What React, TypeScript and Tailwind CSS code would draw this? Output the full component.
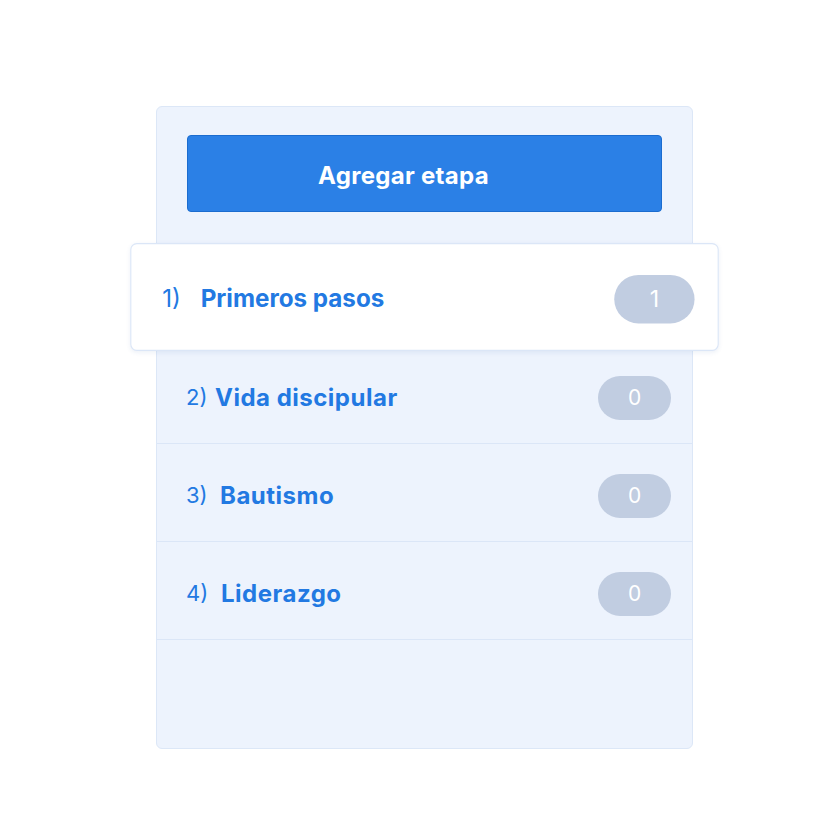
import React from "react";

const stages = [
  { n: 1, name: "Primeros pasos", count: 1, gap: "w-[35px]" },
  { n: 2, name: "Vida discipular", count: 0, gap: "w-[29px]" },
  { n: 3, name: "Bautismo", count: 0, gap: "w-[34px]" },
  { n: 4, name: "Liderazgo", count: 0, gap: "w-[35px]" },
];

const StageRow = ({ n, name, count, gap, active }: { n: number; name: string; count: number; gap: string; active?: boolean }) => {
  return (
    <div
      className={
        active
          ? "relative z-10 flex items-center justify-between h-[98px] pl-[28px] pr-[21px] pt-[3px] bg-white border border-[#dbe6f7] rounded-[6px] scale-[1.1] shadow-[0_1px_4px_rgba(40,90,160,0.08)]"
          : "flex items-center justify-between h-[98px] pl-[29px] pr-[21px] pt-[6px] border-b border-[#dbe6f7]"
      }
    >
      <div className="flex items-center text-[#2279e2]">
        <span className={`${gap} text-[22px] font-normal`}>{n})</span>
        <span className={active ? "text-[22px] font-bold" : "text-[24px] font-bold tracking-[0.5px]"}>{name}</span>
      </div>
      <div className="flex items-center justify-center w-[73px] h-[44px] rounded-full bg-[#c1cde1] text-white text-[21px]">
        {count}
      </div>
    </div>
  );
};

export default function App() {
  return (
    <div
      className="w-[827px] h-[833px] bg-white pt-[106px] pl-[156px]"
      style={{ fontFamily: "Inter, 'Open Sans', sans-serif" }}
    >
      <div className="flex flex-col w-[537px] h-[643px] bg-[#edf3fd] border border-[#dce7f7] rounded-[6px]">
        <div className="pt-[28px] px-[30px]">
          <button className="flex items-center justify-center w-full h-[77px] pr-[42px] pt-[5px] bg-[#2b80e6] border border-[#1b6ccf] rounded-[4px] text-white text-[24px] font-bold tracking-[0.3px]">
            Agregar etapa
          </button>
        </div>
        <div className="mt-[36px] flex flex-col">
          {stages.map((s, i) => (
            <StageRow key={s.n} n={s.n} name={s.name} count={s.count} gap={s.gap} active={i === 0} />
          ))}
        </div>
      </div>
    </div>
  );
}
